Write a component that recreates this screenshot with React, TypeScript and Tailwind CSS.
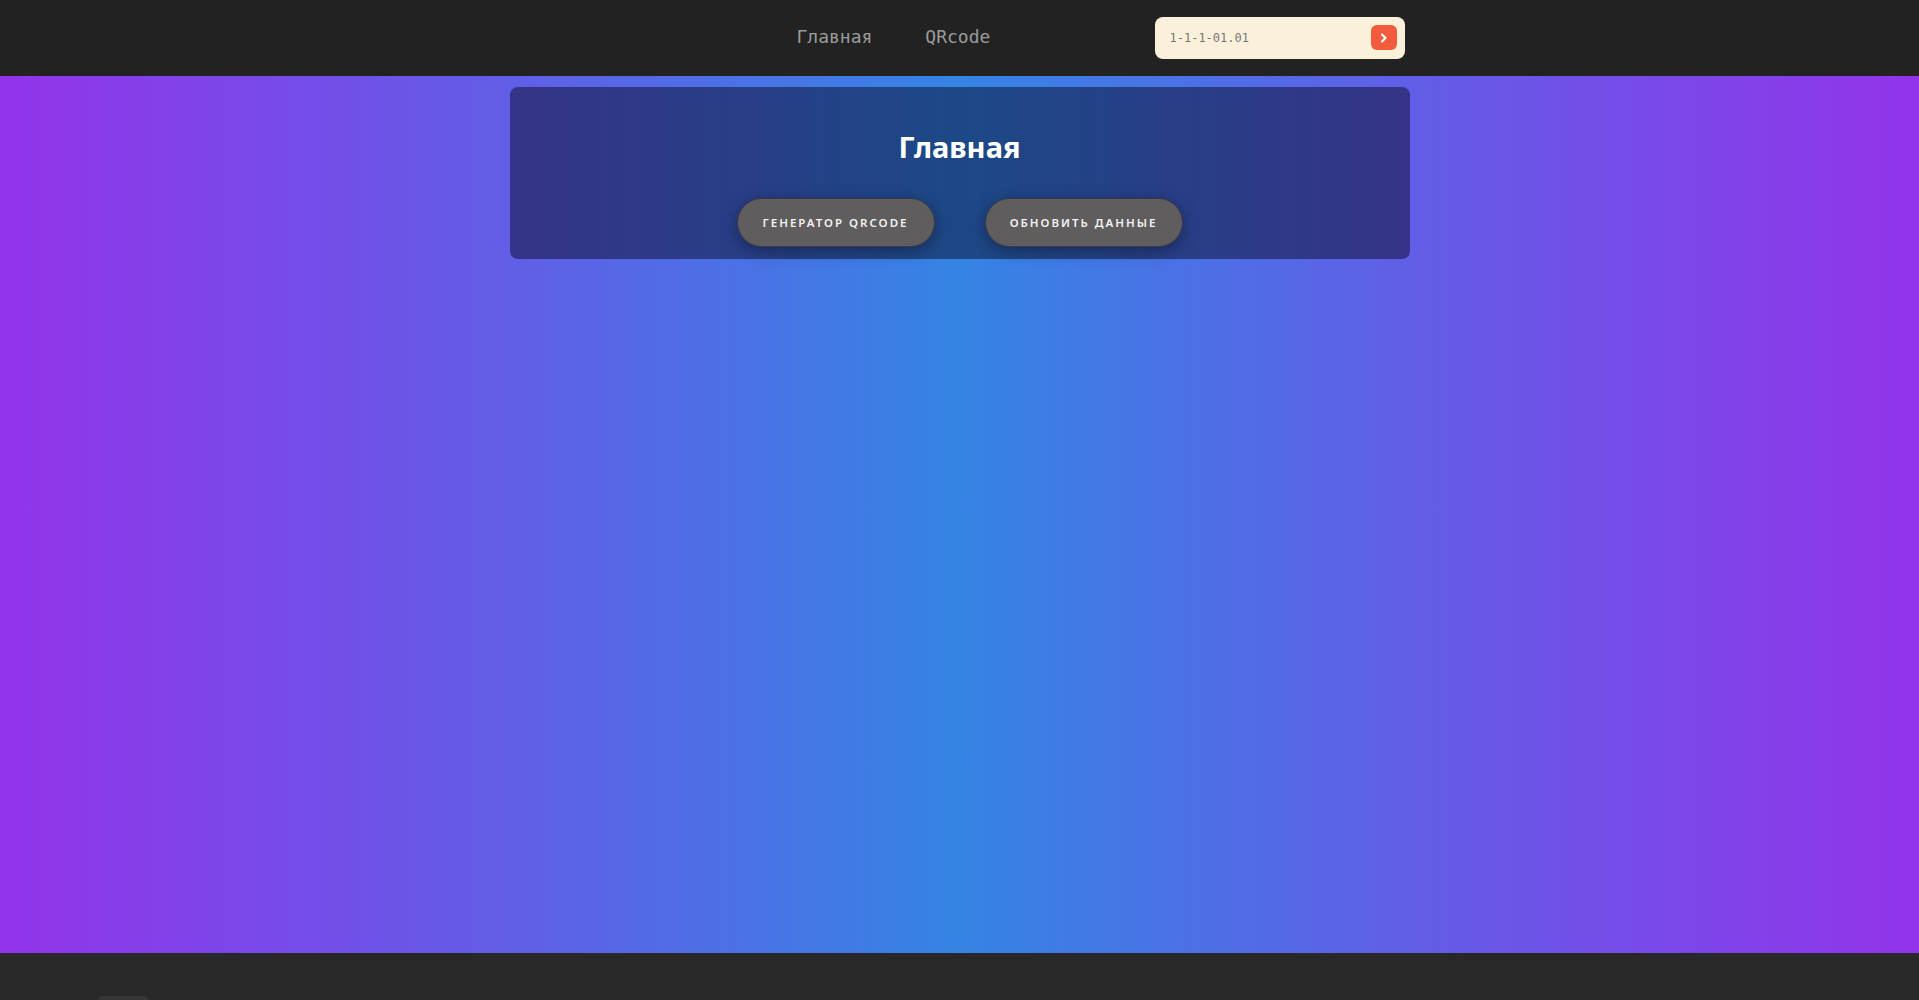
import React, { useState } from "react";

const mono = "font-['DejaVu_Sans_Mono',monospace]";
const sans = "font-['Noto_Sans','Open_Sans',sans-serif]";

const Header: React.FC = () => {
  const [code, setCode] = useState("1-1-1-01.01");
  return (
    <header className="h-[76px] bg-[#222222] flex items-center">
      <div className="w-[900px] mx-auto flex items-center">
        <nav className={`ml-[287px] pb-[3px] flex items-center gap-[53px] text-[18px] text-[#9b9b9b] ${mono}`}>
          <a href="#" className="hover:text-white">Главная</a>
          <a href="#" className="hover:text-white">QRcode</a>
        </nav>
        <div className="ml-auto mr-[5px] mb-[1px] w-[250px] h-[42px] rounded-lg bg-[#fbf1da] flex items-center pl-[15px] pr-[8px]">
          <input
            value={code}
            onChange={(e) => setCode(e.target.value)}
            className={`flex-1 min-w-0 bg-transparent outline-none text-[12px] text-[#777777] ${mono}`}
          />
          <button className="w-[26px] h-[25px] rounded-md bg-[#f25b3c] flex items-center justify-center" aria-label="Перейти">
            <svg width="10" height="12" viewBox="0 0 10 12" fill="none">
              <path d="M3 2.5 L6.5 6 L3 9.5" stroke="white" strokeWidth="2.2" strokeLinecap="round" strokeLinejoin="round" />
            </svg>
          </button>
        </div>
      </div>
    </header>
  );
};

const PillButton: React.FC<{ label: string }> = ({ label }) => (
  <button
    className={`w-[198px] h-[49px] rounded-full bg-[#5f5d5d] border border-[#38384c] shadow-[0_4px_16px_rgba(0,0,0,0.35)] text-[11.5px] font-semibold tracking-[2px] text-[#f2f2f2] uppercase ${sans}`}
  >
    {label}
  </button>
);

export default function App() {
  return (
    <div className="min-h-screen flex flex-col">
      <Header />
      <main className="min-h-[877px] bg-[linear-gradient(90deg,#9333ea_0%,#3584e4_50%,#9333ea_100%)]">
        <section className="w-[900px] mx-auto mt-[11px] rounded-lg bg-[rgba(0,0,20,0.45)] pt-[41px] pb-3 flex flex-col items-center">
          <h1 className={`text-[29px] leading-[38px] font-bold text-white ${sans}`}>Главная</h1>
          <div className="mt-[32px] flex items-center gap-[50px]">
            <PillButton label="Генератор QRcode" />
            <PillButton label="Обновить данные" />
          </div>
        </section>
      </main>
      <footer className="h-[120px] bg-[#282828] pt-[43px] pl-[98px]">
        <div className="w-[50px] h-[30px] rounded bg-[#353535]" />
      </footer>
    </div>
  );
}
